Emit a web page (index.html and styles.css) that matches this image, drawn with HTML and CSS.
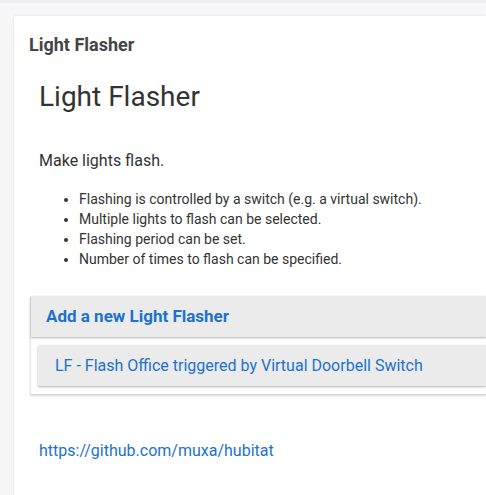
FILE: index.html
```html
<!DOCTYPE html>
<html>
<head>
<meta charset="utf-8">
<link rel="stylesheet" href="styles.css">
</head>
<body>
<div class="topline"></div>
<div class="page">
  <div class="card">
    <div class="card-title">Light Flasher</div>
    <div class="content">
      <h1 class="heading">Light Flasher</h1>
      <p class="intro">Make lights flash.</p>
      <ul class="features">
        <li>Flashing is controlled by a switch (e.g. a virtual switch).</li>
        <li>Multiple lights to flash can be selected.</li>
        <li>Flashing period can be set.</li>
        <li>Number of times to flash can be specified.</li>
      </ul>
    </div>
    <div class="apps">
      <div class="add-btn">Add a new Light Flasher</div>
      <div class="children">
        <div class="child">LF - Flash Office triggered by Virtual Doorbell Switch</div>
      </div>
    </div>
    <div class="footer">
      <a class="link" href="#">https://github.com/muxa/hubitat</a>
    </div>
  </div>
</div>
</body>
</html>
```
FILE: styles.css
```css
html, body {
  margin: 0;
  padding: 0;
  background: #f7f7f8;
  font-family: Roboto, "Liberation Sans", sans-serif;
  overflow: hidden;
  height: 495px;
}
.topline {
  height: 3px;
  background: #ececf1;
}
.page {
  padding: 13px 0 0 14px;
}
.card {
  background: #fff;
  box-shadow: 0 0 3px rgba(0,0,0,0.12);
  border-radius: 2px 0 0 0;
  padding: 18px 0 40px 0;
  min-height: 420px;
}
.card-title {
  font-size: 18px;
  font-weight: 700;
  color: #454545;
  padding-left: 15px;
  line-height: 21px;
}
.content {
  padding: 0 0 0 25px;
}
.heading {
  margin: 25px 0 0 0;
  font-size: 28px;
  font-weight: 400;
  color: #333;
  line-height: 33px;
}
.intro {
  margin: 38px 0 0 0;
  font-size: 16px;
  color: #333;
  line-height: 20px;
}
.features {
  margin: 18px 0 0 0;
  padding-left: 40px;
  font-size: 14px;
  color: #333;
  line-height: 20px;
}
.apps {
  margin: 27px 0 0 16px;
  border-bottom: 1px solid #d6d6d6;
  border-left: 1px solid #e4e4e4;
  box-shadow: 0 1px 2px rgba(0,0,0,0.15);
}
.add-btn {
  background: #ebebeb;
  color: #1c72cf;
  font-weight: 700;
  font-size: 17px;
  line-height: 41px;
  padding-left: 15px;
  box-shadow: 0 1px 2px rgba(0,0,0,0.3);
}
.children {
  padding: 8px 0 8px 7px;
}
.child {
  background: #ebebeb;
  color: #1c72cf;
  font-size: 16px;
  line-height: 41px;
  padding-left: 17px;
  box-shadow: 0 1px 2px rgba(0,0,0,0.3);
}
.footer {
  padding: 46px 0 0 25px;
}
.link {
  color: #1c72cf;
  font-size: 16px;
  text-decoration: none;
  line-height: 20px;
}
```
